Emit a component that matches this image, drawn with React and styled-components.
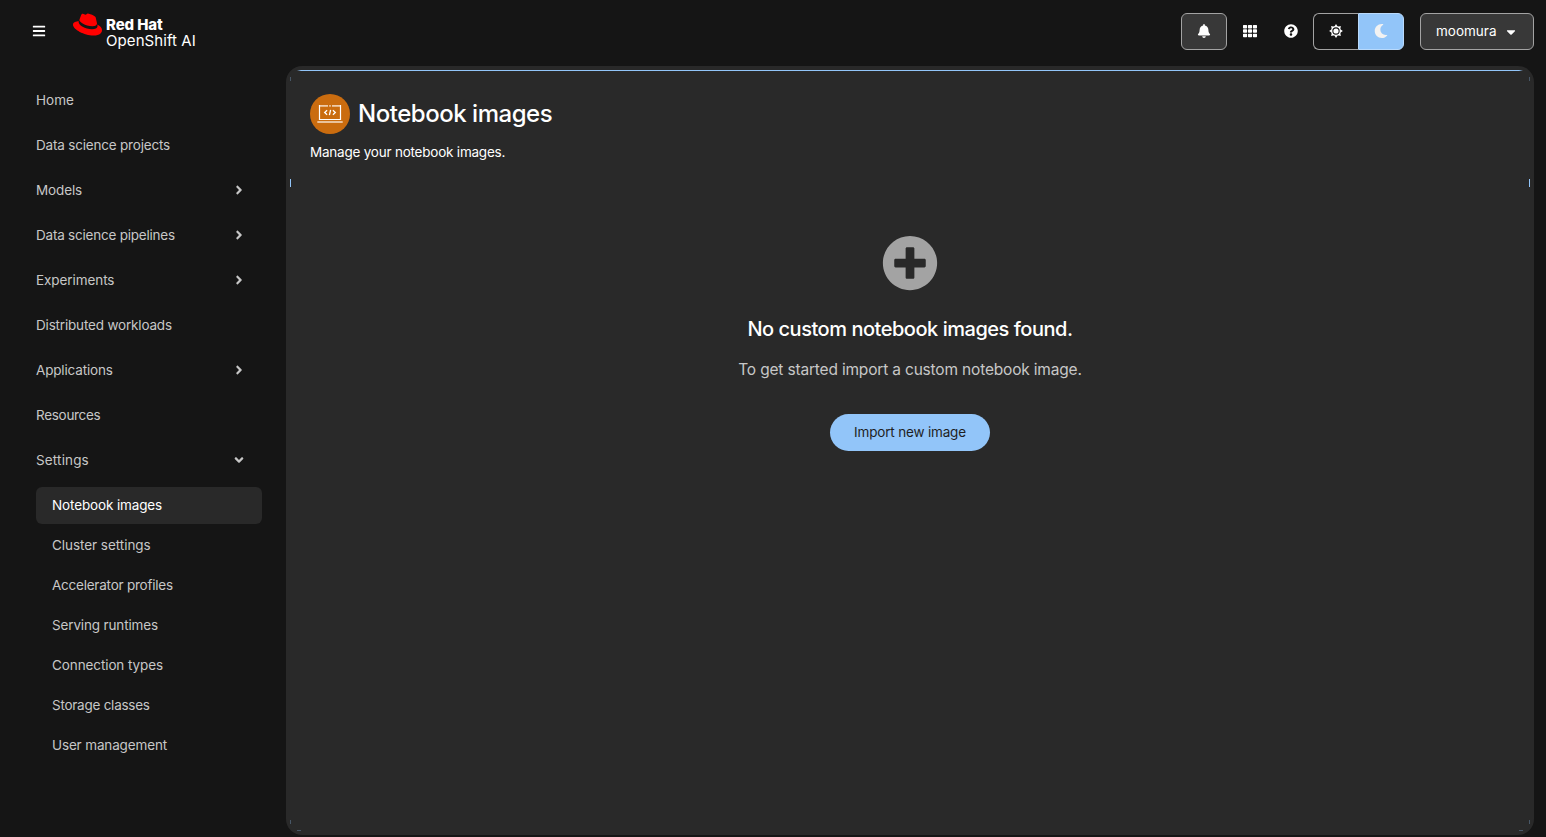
import styled, { createGlobalStyle } from "styled-components"
import {
    FaAngleDown,
    FaAngleRight,
    FaBars,
    FaBell,
    FaCaretDown,
    FaMoon,
    FaPlusCircle,
    FaQuestionCircle,
    FaTh,
} from "react-icons/fa"
import { SiRedhat } from "react-icons/si"

const navItems = [
    { title: "Home", spacing: 0 },
    { title: "Data science projects", spacing: -0.19 },
    { title: "Models", spacing: -0.12, expandable: true },
    { title: "Data science pipelines", spacing: -0.22, expandable: true },
    { title: "Experiments", spacing: -0.08, expandable: true },
    { title: "Distributed workloads", spacing: -0.18 },
    { title: "Applications", spacing: -0.16, expandable: true },
    { title: "Resources", spacing: -0.3 },
    {
        title: "Settings",
        spacing: 0.15,
        expandable: true,
        subNav: [
            { title: "Notebook images", spacing: -0.13, current: true },
            { title: "Cluster settings", spacing: -0.05 },
            { title: "Accelerator profiles", spacing: -0.23 },
            { title: "Serving runtimes", spacing: -0.15 },
            { title: "Connection types", spacing: -0.1 },
            { title: "Storage classes", spacing: -0.25 },
            { title: "User management", spacing: -0.14 },
        ],
    },
]

const rays = [0, 45, 90, 135, 180, 225, 270, 315]

const SunIcon = () => (
    <svg width="14" height="14" viewBox="0 0 14 14" fill="none" stroke="currentColor">
        <circle cx="7" cy="7" r="4.3" strokeWidth="1.2" />
        <circle cx="7" cy="7" r="2.6" fill="currentColor" stroke="none" />
        {rays.map((angle) => (
            <path key={angle} d="M5.3 2.8 7 .1l1.7 2.7z" fill="currentColor" stroke="none" transform={`rotate(${angle} 7 7)`} />
        ))}
    </svg>
)

const NotebookIcon = () => (
    <svg width="26" height="20" viewBox="0 0 26 20" fill="none" stroke="#fff">
        <path d="M2.5 1v14.5h21V1" strokeWidth="1.2" />
        <path d="M2.5 1.9H11M12.2 1.9h1.6M15 1.9h8.5" strokeWidth="1.6" opacity=".65" />
        <path d="M.3 18h25.4" strokeWidth="1.8" opacity=".65" />
        <path d="M10.1 6.3 7.7 8.5l2.4 2.2M15.9 6.3l2.4 2.2-2.4 2.2M13.6 5.8l-1.2 5.4" strokeWidth="1.3" />
    </svg>
)

const App = () => {
    return (
        <>
            <GlobalStyle />
            <Page>
                <Masthead>
                    <MenuButton><FaBars /></MenuButton>
                    <Brand>
                        <SiRedhat />
                        <BrandText>
                            <BrandName>Red Hat</BrandName>
                            <BrandProduct>OpenShift AI</BrandProduct>
                        </BrandText>
                    </Brand>
                    <Toolbar>
                        <NotificationButton><FaBell /></NotificationButton>
                        <PlainButton><FaTh /></PlainButton>
                        <PlainButton><FaQuestionCircle /></PlainButton>
                        <ThemeToggle>
                            <ThemeOption><SunIcon /></ThemeOption>
                            <ThemeOption $selected><FaMoon /></ThemeOption>
                        </ThemeToggle>
                        <UserToggle>
                            moomura
                            <FaCaretDown />
                        </UserToggle>
                    </Toolbar>
                </Masthead>
                <Body>
                    <SideBar>
                        {navItems.map((item) => (
                            <div key={item.title}>
                                <NavLink $spacing={item.spacing}>
                                    {item.title}
                                    {item.subNav
                                        ? <FaAngleDown />
                                        : item.expandable
                                        ? <FaAngleRight />
                                        : null}
                                </NavLink>
                                {item.subNav && (
                                    <SubNav>
                                        {item.subNav.map((sub) => (
                                            <SubNavLink key={sub.title} $current={sub.current} $spacing={sub.spacing}>
                                                {sub.title}
                                            </SubNavLink>
                                        ))}
                                    </SubNav>
                                )}
                            </div>
                        ))}
                    </SideBar>
                    <Main>
                        <FocusLine />
                        <FocusTick $side="left" $top="113px" />
                        <FocusTick $side="right" $top="113px" />
                        <CornerTick $side="left" $edge="top" />
                        <CornerTick $side="right" $edge="top" />
                        <CornerTick $side="left" $edge="bottom" />
                        <CornerTick $side="right" $edge="bottom" />
                        <CornerDash $side="left" />
                        <CornerDash $side="right" />
                        <PageHeader>
                            <TitleRow>
                                <TitleIcon><NotebookIcon /></TitleIcon>
                                <Title>Notebook images</Title>
                            </TitleRow>
                            <Description>Manage your notebook images.</Description>
                        </PageHeader>
                        <EmptyState>
                            <FaPlusCircle />
                            <EmptyTitle>No custom notebook images found.</EmptyTitle>
                            <EmptyText>To get started import a custom notebook image.</EmptyText>
                            <ImportButton>Import new image</ImportButton>
                        </EmptyState>
                    </Main>
                </Body>
            </Page>
        </>
    )
}

const GlobalStyle = createGlobalStyle`
    * {
        box-sizing: border-box;
    }
    body {
        margin: 0;
        background: #151515;
        color: #fff;
        font-family: Inter, "Liberation Sans", sans-serif;
        font-size: 13.5px;
        line-height: 21px;
    }
    button {
        font: inherit;
        color: inherit;
        margin: 0;
        padding: 0;
        border: 0;
        background: none;
    }
    svg {
        display: block;
        flex: none;
        font-size: 14px;
    }
`

const Page = styled.div`
    display: flex;
    flex-direction: column;
    height: 837px;
    overflow: hidden;
`

const Masthead = styled.header`
    display: flex;
    align-items: center;
    flex: none;
    height: 66px;
    padding: 0 12px 4px 32px;
`

const MenuButton = styled.button`
    font-size: 14px;
`

const Brand = styled.div`
    display: flex;
    margin-left: 27px;
    height: 36px;
    svg {
        width: 29px;
        height: 29px;
        margin-top: -3px;
        color: #f00;
    }
`

const BrandText = styled.div`
    margin-left: 4px;
    padding-top: 4px;
    line-height: 16px;
    white-space: nowrap;
`

const BrandName = styled.div`
    font-size: 15px;
    font-weight: 800;
    letter-spacing: -0.1px;
`

const BrandProduct = styled.div`
    font-size: 15px;
    letter-spacing: 0.08px;
`

const Toolbar = styled.div`
    display: flex;
    align-items: center;
    margin-left: auto;
`

const NotificationButton = styled.button`
    display: grid;
    place-items: center;
    width: 46px;
    height: 37px;
    margin-right: 2px;
    border: 1px solid #a3a3a3;
    border-radius: 6px;
    background: #383838;
`

const PlainButton = styled.button`
    display: grid;
    place-items: center;
    width: 41px;
    height: 37px;
`

const ThemeToggle = styled.div`
    display: flex;
    margin-left: 2px;
`

const ThemeOption = styled.button`
    display: grid;
    place-items: center;
    width: ${({ $selected }) => ($selected ? "46px" : "45px")};
    height: 37px;
    border: 1px solid ${({ $selected }) => ($selected ? "#b9dafc" : "#a3a3a3")};
    border-right-width: ${({ $selected }) => ($selected ? "1px" : "0")};
    border-radius: ${({ $selected }) => ($selected ? "0 6px 6px 0" : "6px 0 0 6px")};
    color: ${({ $selected }) => ($selected ? "#f2f2f2" : "#fff")};
    background: ${({ $selected }) => ($selected ? "#92c5f9" : "transparent")};
`

const UserToggle = styled.button`
    display: flex;
    align-items: center;
    justify-content: space-between;
    width: 114px;
    height: 37px;
    margin-left: 16px;
    padding: 0 15px;
    border: 1px solid #a3a3a3;
    border-radius: 6px;
    background: #383838;
    svg {
        margin-top: 1px;
    }
`

const Body = styled.div`
    display: flex;
    flex: 1;
    min-height: 0;
    padding: 0 12px 2px 0;
`

const SideBar = styled.nav`
    flex: none;
    width: 286px;
    padding: 12px 24px 0 36px;
    color: #c7c7c7;
`

const NavLink = styled.a`
    display: flex;
    align-items: center;
    justify-content: space-between;
    height: 45px;
    padding-right: 16px;
    letter-spacing: ${({ $spacing }) => $spacing}px;
    svg {
        margin-bottom: 2px;
    }
`

const SubNav = styled.div`
    display: flex;
    flex-direction: column;
    gap: 3px;
    padding-top: 4px;
`

const SubNavLink = styled.a`
    display: flex;
    align-items: center;
    height: 37px;
    padding-left: 16px;
    border-radius: 6px;
    letter-spacing: ${({ $spacing }) => $spacing}px;
    color: ${({ $current }) => ($current ? "#fff" : "inherit")};
    background: ${({ $current }) => ($current ? "#292929" : "transparent")};
`

const Main = styled.main`
    position: relative;
    flex: 1;
    border-radius: 16px;
    background: #292929;
`

/* visible bits of the focus outline */
const FocusLine = styled.span`
    position: absolute;
    top: 4px;
    left: 11px;
    right: 11px;
    height: 1px;
    background: linear-gradient(90deg, transparent, #92c5f9 4px, #92c5f9 calc(100% - 4px), transparent);
`

const FocusTick = styled.span`
    position: absolute;
    top: ${({ $top }) => $top};
    ${({ $side }) => $side}: 4px;
    width: 1px;
    height: 8px;
    background: #92c5f9;
`

const CornerTick = styled.span`
    position: absolute;
    ${({ $edge }) => $edge}: 11px;
    ${({ $side }) => $side}: 4px;
    width: 1px;
    height: 4px;
    background: #92c5f9;
    opacity: 0.3;
`

const CornerDash = styled.span`
    position: absolute;
    bottom: 4px;
    ${({ $side }) => $side}: 11px;
    width: 4px;
    height: 1px;
    background: #92c5f9;
    opacity: 0.3;
`

const PageHeader = styled.section`
    padding: 28px 24px 0;
`

const TitleRow = styled.div`
    display: flex;
    align-items: center;
    gap: 8px;
    height: 40px;
`

const TitleIcon = styled.span`
    display: grid;
    place-items: center;
    width: 40px;
    height: 40px;
    border-radius: 50%;
    background: #ca6c0f;
`

const Title = styled.h1`
    margin: 0;
    font-size: 24px;
    font-weight: 500;
    line-height: 32px;
    letter-spacing: -0.47px;
`

const Description = styled.p`
    margin: 8px 0 0;
    letter-spacing: -0.22px;
`

const EmptyState = styled.section`
    display: flex;
    flex-direction: column;
    align-items: center;
    padding-top: 73px;
    > svg {
        width: 56px;
        height: 56px;
        margin-top: -1px;
        color: #a3a3a3;
    }
`

const EmptyTitle = styled.h2`
    margin: 25px 0 0;
    font-size: 20px;
    font-weight: 500;
    line-height: 26px;
    letter-spacing: -0.47px;
`

const EmptyText = styled.p`
    margin: 16px 0 0;
    font-size: 15.5px;
    line-height: 24px;
    letter-spacing: -0.18px;
    color: #c7c7c7;
`

const ImportButton = styled.button`
    width: 160px;
    height: 37px;
    margin-top: 32px;
    border-radius: 19px;
    letter-spacing: -0.17px;
    color: #1f1f1f;
    background: #92c5f9;
`

export default App
